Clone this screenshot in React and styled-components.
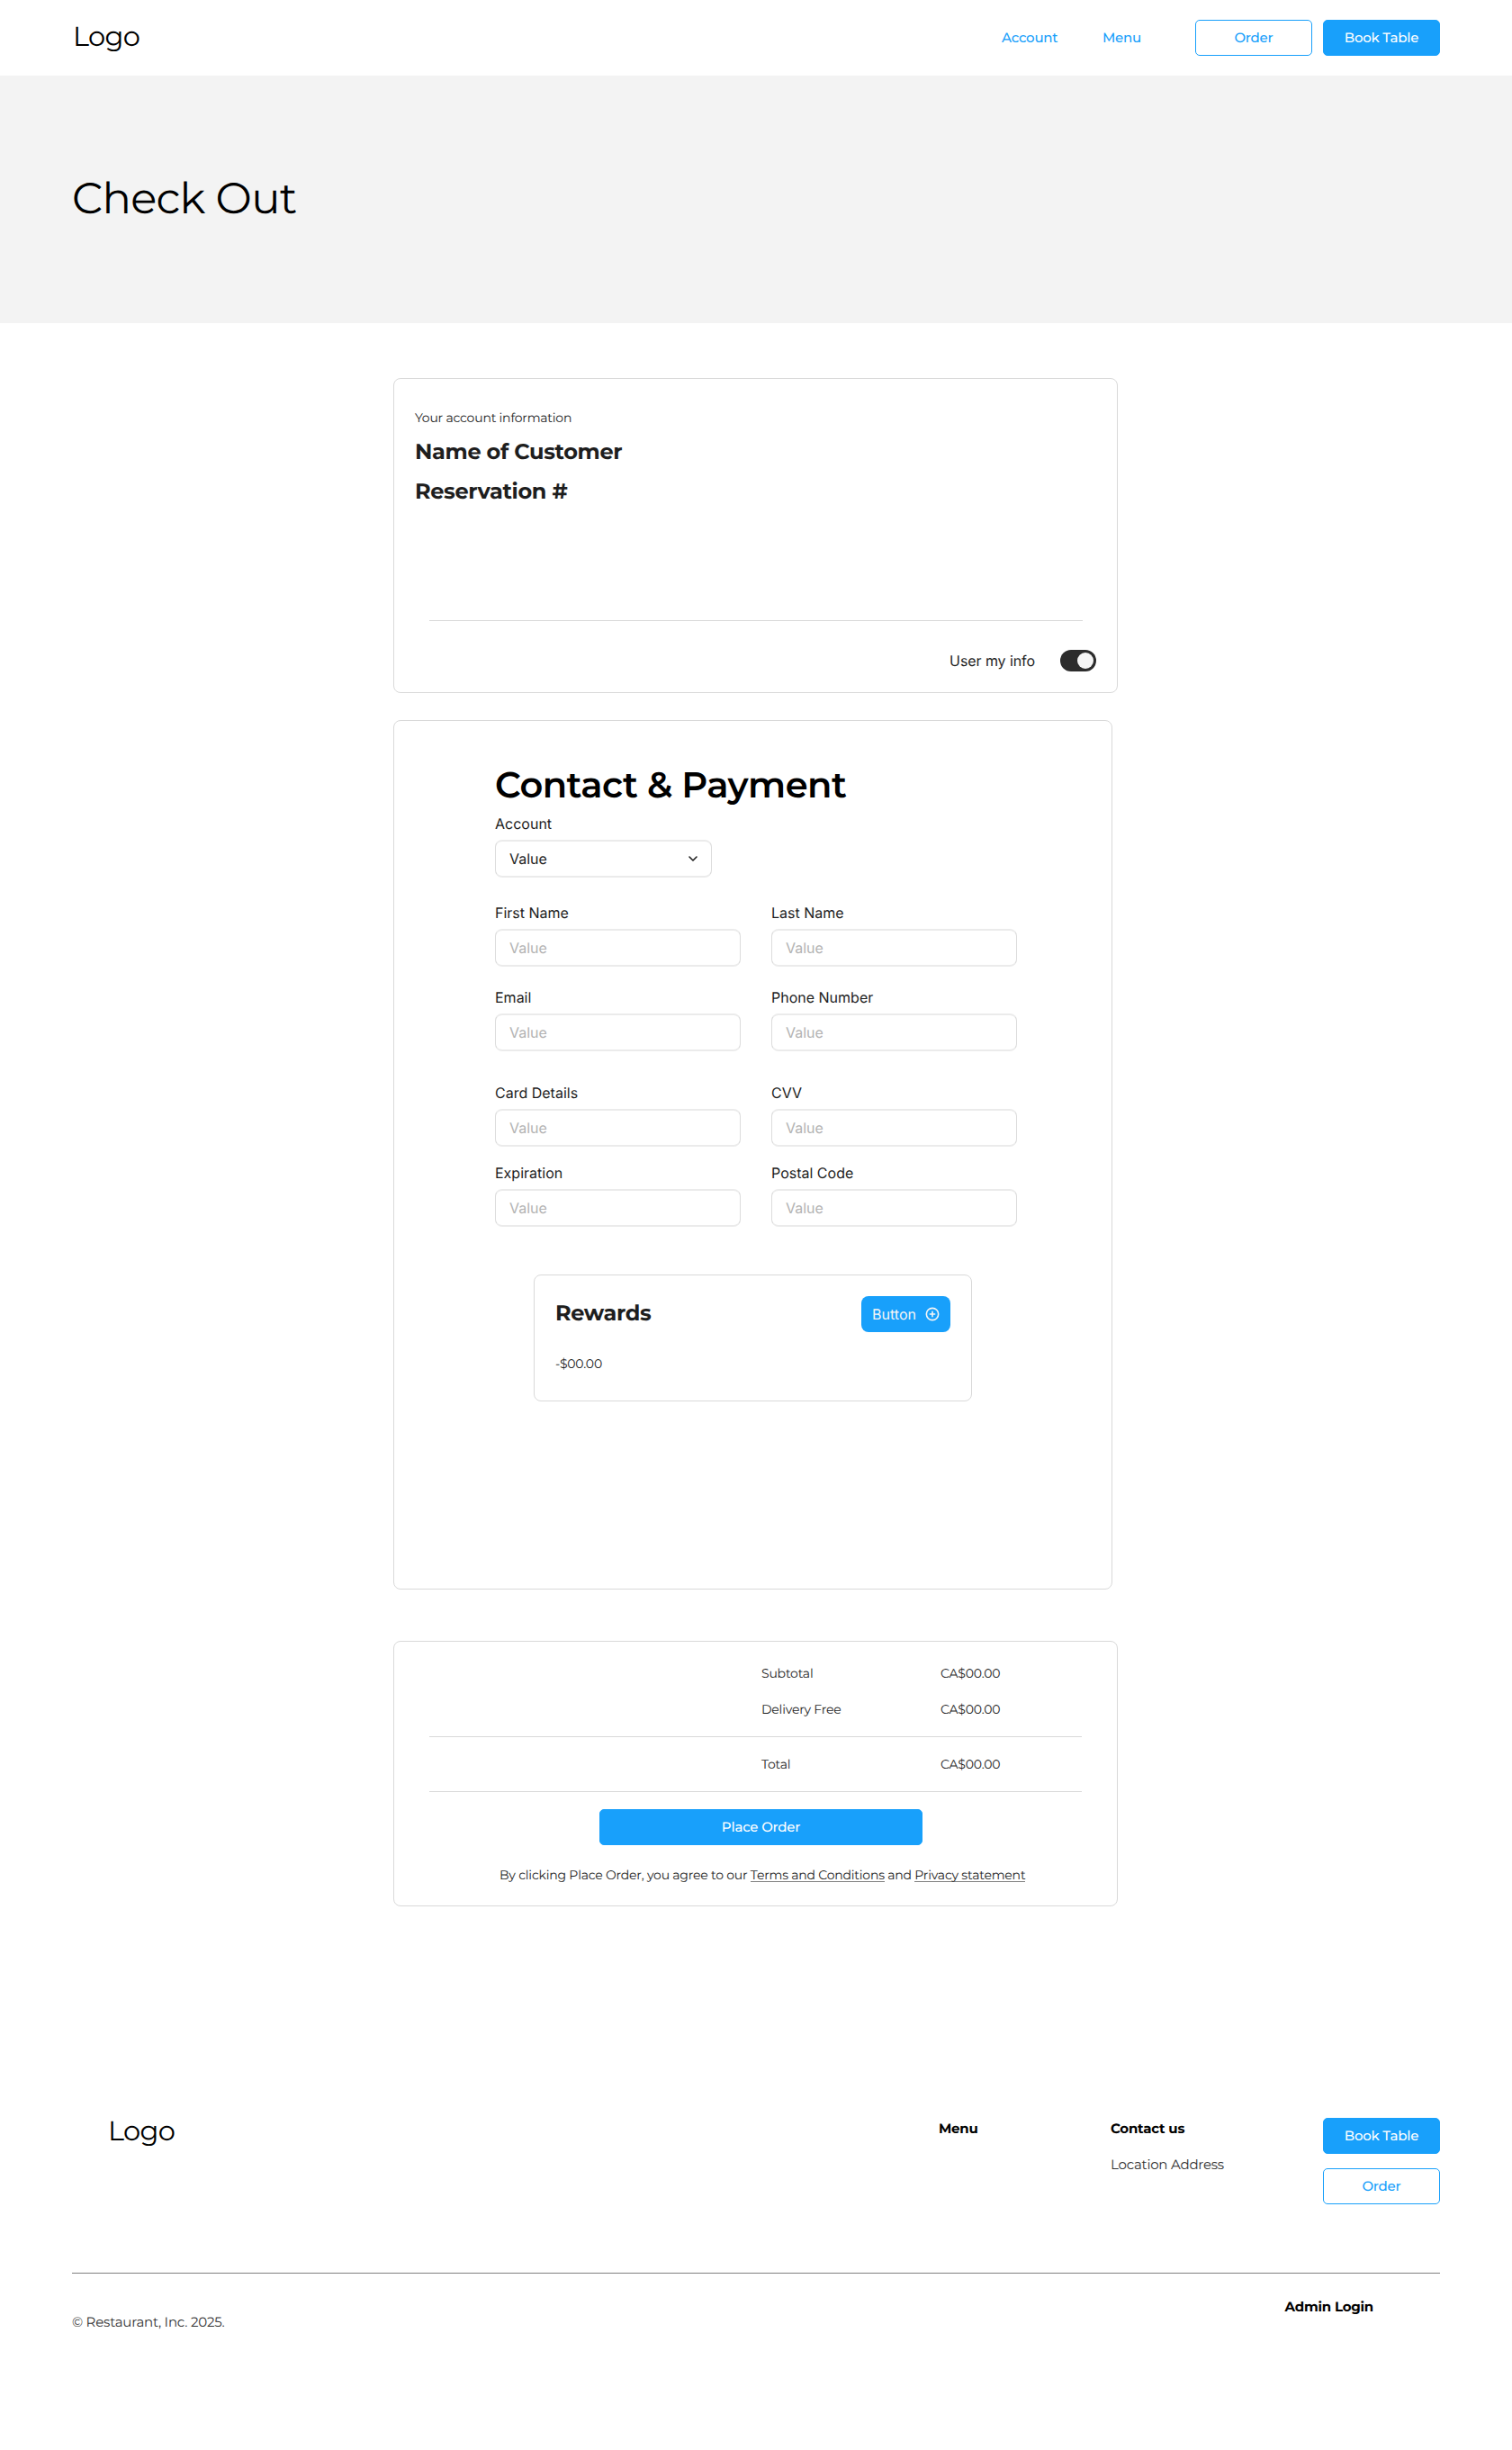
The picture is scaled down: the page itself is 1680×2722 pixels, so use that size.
import React, { useState } from "react";
import styled, { createGlobalStyle, css } from "styled-components";

const blue = "#18a0fb";
const line = "#d9d9d9";
const heading = '"Montserrat", "Inter", "Liberation Sans", sans-serif';
const body = '"Inter", "Liberation Sans", sans-serif';

const GlobalStyle = createGlobalStyle`
  * { box-sizing: border-box; }
  body { margin: 0; background: #fff; text-rendering: geometricPrecision; }
  button, input { text-rendering: inherit; }
  h1, h2, h3, p { margin: 0; }
`;

const montserrat = (size, lineHeight, weight, spacing = "-0.015em") => css`
  font-family: ${heading};
  font-size: ${size}px;
  line-height: ${lineHeight}px;
  font-weight: ${weight};
  letter-spacing: ${spacing};
  white-space: nowrap;
`;

const Page = styled.div`
  display: flex;
  flex-direction: column;
  width: 1680px;
  min-height: 2722px;
  color: #000;
`;

const Header = styled.header`
  display: flex;
  align-items: center;
  justify-content: space-between;
  height: 84px;
  padding: 0 80px;
`;

const Logo = styled.a`
  ${montserrat(30.5, 40, 400, "-0.022em")}
  color: #000;
`;

const HeaderLogo = styled(Logo)`
  margin: 0 0 4px 1px;
`;

const Nav = styled.nav`
  display: flex;
  align-items: center;
`;

const NavLink = styled.a`
  ${montserrat(15, 20, 500)}
  width: ${(p) => p.$width}px;
  color: ${blue};
`;

const Actions = styled.div`
  display: flex;
  flex-direction: ${(p) => (p.$stacked ? "column" : "row")};
  gap: ${(p) => (p.$stacked ? 16 : 12)}px;
`;

const Button = styled.button`
  ${montserrat(15, 20, 500)}
  width: ${(p) => p.$width || 130}px;
  height: 40px;
  padding: 0;
  border: 1px solid ${blue};
  border-radius: 5px;
  background: ${(p) => (p.$outline ? "#fff" : blue)};
  color: ${(p) => (p.$outline ? blue : "#fff")};
`;

const Hero = styled.section`
  display: flex;
  align-items: center;
  height: 275px;
  padding: 0 80px 1px;
  background: #f3f3f3;
`;

const PageTitle = styled.h1`
  ${montserrat(48, 58, 400, "-0.0135em")}
`;

const Main = styled.main`
  display: flex;
  flex-direction: column;
  align-items: flex-start;
  padding: 61px 0 0 437px;
`;

const Card = styled.section`
  display: flex;
  flex-direction: column;
  border: 1px solid ${line};
  border-radius: 8px;
  background: #fff;
`;

const AccountCard = styled(Card)`
  width: 805px;
  height: 350px;
  padding: 33px 23px 0;
`;

const PaymentCard = styled(Card)`
  width: 799px;
  height: 966px;
  margin-top: 30px;
  padding: 48px 0 0 112px;
`;

const SummaryCard = styled(Card)`
  width: 805px;
  height: 295px;
  margin-top: 57px;
  padding-top: 25px;
`;

const SmallText = styled.p`
  ${montserrat(14, 20, 400)}
  color: #1e1e1e;
`;

const CardHeading = styled.h3`
  ${montserrat(24, 30, 700)}
  margin-top: ${(p) => p.$top || 0}px;
  color: #1e1e1e;
`;

const Divider = styled.hr`
  width: ${(p) => p.$width || 725}px;
  height: 1px;
  margin: ${(p) => p.$margin};
  border: 0;
  background: ${line};
  flex: none;
`;

const ToggleRow = styled.div`
  display: flex;
  align-items: center;
  justify-content: flex-end;
  gap: 28px;
  margin-top: 32px;
  font: 400 16px/22px ${body};
  letter-spacing: -0.005em;
  color: #1e1e1e;
`;

const Toggle = styled.button`
  display: flex;
  justify-content: ${(p) => (p.$on ? "flex-end" : "flex-start")};
  width: 40px;
  height: 24px;
  padding: 3px;
  border: 0;
  border-radius: 12px;
  background: #2c2c2c;
`;

const Knob = styled.span`
  width: 18px;
  height: 18px;
  border-radius: 50%;
  background: #f5f5f5;
`;

const SectionTitle = styled.h2`
  ${montserrat(40, 48, 600, "-0.013em")}
`;

const FieldRow = styled.div`
  display: flex;
  gap: 34px;
  margin-top: ${(p) => p.$top}px;
`;

const FieldBlock = styled.label`
  display: flex;
  flex-direction: column;
  gap: 7px;
  width: ${(p) => p.$width || 273}px;
  font: 400 16px/22px ${body};
  color: #1e1e1e;
`;

const fieldBox = css`
  width: 100%;
  height: 42px;
  padding: 0 12px 0 15px;
  border: solid #ebebeb;
  border-width: 2px 1px;
  border-left-color: #dcdcdc;
  border-right-color: #dcdcdc;
  border-radius: 8px;
  background: #fff;
`;

const Input = styled.input`
  ${fieldBox}
  font: 400 16px/22px ${body};
  color: #1e1e1e;
  outline: none;
  &::placeholder {
    color: #b3b3b3;
    opacity: 1;
  }
`;

const SelectBox = styled.span`
  ${fieldBox}
  display: flex;
  align-items: center;
  justify-content: space-between;
`;

const Icon = styled.svg`
  width: 16px;
  height: 16px;
  fill: none;
  stroke: currentColor;
  stroke-width: 1.6;
  stroke-linecap: round;
  stroke-linejoin: round;
`;

const RewardsCard = styled(Card)`
  width: 487px;
  height: 141px;
  margin: 53px 0 0 43px;
  padding: 23px;
`;

const RewardsTop = styled.div`
  display: flex;
  justify-content: space-between;
  align-items: flex-start;
  margin-bottom: 25px;
`;

const IconButton = styled.button`
  display: flex;
  align-items: center;
  justify-content: center;
  gap: 10px;
  width: 99px;
  height: 40px;
  padding: 0;
  border: 0;
  border-radius: 8px;
  background: ${blue};
  font: 400 16px/16px ${body};
  color: #f5f5f5;
`;

const SummaryRow = styled.div`
  display: grid;
  grid-template-columns: 199px auto;
  margin: 0 0 20px 408px;
`;

const PlaceOrder = styled(Button)`
  margin: 19px 0 0 228px;
`;

const Legal = styled(SmallText)`
  margin: 23px 0 0 117px;
  letter-spacing: -0.0145em;
`;

const LegalLink = styled.a`
  border-bottom: 1px solid #808080;
  display: inline-block;
  height: 18px;
`;

const Footer = styled.footer`
  display: flex;
  flex-direction: column;
  margin-top: 229px;
  padding: 0 80px;
`;

const FooterTop = styled.div`
  display: grid;
  grid-template-columns: 923px 191px 236px 130px;
  height: 178px;
  padding-left: 40px;
`;

const FooterColumn = styled.div`
  display: flex;
  flex-direction: column;
  gap: 20px;
  padding-top: ${(p) => p.$top}px;
`;

const FooterHeading = styled.h3`
  ${montserrat(15, 20, 700)}
`;

const FooterText = styled.p`
  ${montserrat(15, 20, 400)}
  color: #333;
`;

const FooterBottom = styled.div`
  display: flex;
  justify-content: space-between;
  align-items: flex-start;
  border-top: 1px solid #808080;
  padding: 27px 74px 0 0;
`;

const Copyright = styled(FooterText)`
  margin-top: 17px;
`;

const fields = [
  [28, "First Name", "Last Name"],
  [23, "Email", "Phone Number"],
  [35, "Card Details", "CVV"],
  [18, "Expiration", "Postal Code"],
];

const Field = ({ label }) => (
  <FieldBlock>
    {label}
    <Input placeholder="Value" />
  </FieldBlock>
);

export default function App() {
  const [useInfo, setUseInfo] = useState(true);
  return (
    <Page>
      <GlobalStyle />
      <Header>
        <HeaderLogo>Logo</HeaderLogo>
        <Nav>
          <NavLink $width={112}>Account</NavLink>
          <NavLink $width={103}>Menu</NavLink>
          <Actions>
            <Button $outline>Order</Button>
            <Button>Book Table</Button>
          </Actions>
        </Nav>
      </Header>

      <Hero>
        <PageTitle>Check Out</PageTitle>
      </Hero>

      <Main>
        <AccountCard>
          <SmallText>Your account information</SmallText>
          <CardHeading $top={14}>Name of Customer</CardHeading>
          <CardHeading $top={14}>Reservation #</CardHeading>
          <Divider $width={726} $margin="127px 0 0 16px" />
          <ToggleRow>
            User my info
            <Toggle $on={useInfo} onClick={() => setUseInfo(!useInfo)}>
              <Knob />
            </Toggle>
          </ToggleRow>
        </AccountCard>

        <PaymentCard>
          <SectionTitle>Contact &amp; Payment</SectionTitle>
          <FieldRow $top={7}>
            <FieldBlock $width={241}>
              Account
              <SelectBox>
                Value
                <Icon viewBox="0 0 16 16">
                  <path d="M4 6l4 4 4-4" />
                </Icon>
              </SelectBox>
            </FieldBlock>
          </FieldRow>
          {fields.map(([top, left, right]) => (
            <FieldRow key={left} $top={top}>
              <Field label={left} />
              <Field label={right} />
            </FieldRow>
          ))}
          <RewardsCard>
            <RewardsTop>
              <CardHeading $top={5}>Rewards</CardHeading>
              <IconButton>
                Button
                <Icon viewBox="0 0 16 16">
                  <circle cx="8" cy="8" r="6.67" />
                  <path d="M8 5.33v5.34M5.33 8h5.34" />
                </Icon>
              </IconButton>
            </RewardsTop>
            <SmallText>-$00.00</SmallText>
          </RewardsCard>
        </PaymentCard>

        <SummaryCard>
          <SummaryRow>
            <SmallText>Subtotal</SmallText>
            <SmallText>CA$00.00</SmallText>
          </SummaryRow>
          <SummaryRow>
            <SmallText>Delivery Free</SmallText>
            <SmallText>CA$00.00</SmallText>
          </SummaryRow>
          <Divider $margin="0 0 20px 39px" />
          <SummaryRow>
            <SmallText>Total</SmallText>
            <SmallText>CA$00.00</SmallText>
          </SummaryRow>
          <Divider $margin="0 0 0 39px" />
          <PlaceOrder $width={359}>Place Order</PlaceOrder>
          <Legal>
            By clicking Place Order, you agree to our <LegalLink>Terms and Conditions</LegalLink> and{" "}
            <LegalLink>Privacy statement</LegalLink>
          </Legal>
        </SummaryCard>
      </Main>

      <Footer>
        <FooterTop>
          <Logo>Logo</Logo>
          <FooterColumn $top={8}>
            <FooterHeading>Menu</FooterHeading>
          </FooterColumn>
          <FooterColumn $top={8}>
            <FooterHeading>Contact us</FooterHeading>
            <FooterText>Location Address</FooterText>
          </FooterColumn>
          <FooterColumn $top={6}>
            <Actions $stacked>
              <Button>Book Table</Button>
              <Button $outline>Order</Button>
            </Actions>
          </FooterColumn>
        </FooterTop>
        <FooterBottom>
          <Copyright>© Restaurant, Inc. 2025.</Copyright>
          <FooterHeading>Admin Login</FooterHeading>
        </FooterBottom>
      </Footer>
    </Page>
  );
}
